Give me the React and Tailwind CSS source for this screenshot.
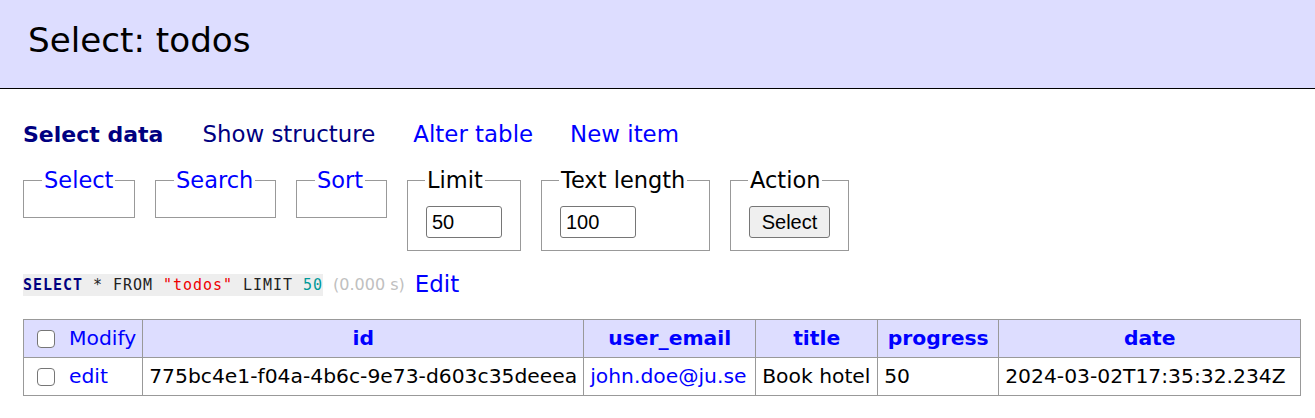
import React from "react";

const fieldsets = [
  { label: "Select", w: "w-[112px]" },
  { label: "Search", w: "w-[121px]" },
  { label: "Sort", w: "w-[91px]" },
];

const cols = [
  { key: "id", w: "w-[441px]" },
  { key: "user_email", w: "w-[172px]" },
  { key: "title", w: "w-[122px]" },
  { key: "progress", w: "w-[121px]" },
  { key: "date", w: "w-[302px]" },
];

const Check = () => (
  <span className="inline-block w-[18px] h-[18px] border-[1.5px] border-[#767676] rounded-[4px] bg-white" />
);

export default function App() {
  return (
    <div className="w-[1315px] h-[418px] bg-white overflow-hidden font-['DejaVu_Sans',Verdana,sans-serif] text-black">
      {/* page heading */}
      <div className="h-[89px] bg-[#ddf] border-b border-black flex items-center pb-[8px] pl-[28px]">
        <h2 className="text-[34.2px] leading-[42px] font-normal">Select: todos</h2>
      </div>

      <div className="pl-[23px]">
        {/* links */}
        <div className="mt-[32px] flex items-center gap-[38px] text-[22.9px] leading-[27px]">
          <span className="font-bold text-[22px] text-[#000080]">Select data</span>
          <a className="ml-[1px] text-[#000080]">Show structure</a>
          <a className="text-[#0000ff]">Alter table</a>
          <a className="-ml-[1px] text-[#0000ff]">New item</a>
        </div>

        {/* form */}
        <div className="mt-[19px] flex items-start gap-[20px] text-[22.5px] leading-[27px]">
          {fieldsets.map((f) => (
            <fieldset key={f.label} className={`${f.w} h-[51px] border border-[#999] px-[17px] pb-[10px]`}>
              <legend className="ml-[1px] px-[2px] text-[#0000ff]">{f.label}</legend>
            </fieldset>
          ))}
          <fieldset className="w-[114px] h-[84px] border border-[#999] px-[17px]">
            <legend className="px-[2px]">Limit</legend>
            <input
              defaultValue="50"
              className="mt-[12px] ml-[1px] w-[76px] h-[32px] border border-[#767676] rounded-[3px] px-[5px] text-[20px] font-['Liberation_Sans',Arial,sans-serif] outline-none"
            />
          </fieldset>
          <fieldset className="w-[169px] h-[84px] border border-[#999] px-[17px]">
            <legend className="px-[2px]">Text length</legend>
            <input
              defaultValue="100"
              className="mt-[12px] ml-[1px] w-[76px] h-[32px] border border-[#767676] rounded-[3px] px-[5px] text-[20px] font-['Liberation_Sans',Arial,sans-serif] outline-none"
            />
          </fieldset>
          <fieldset className="w-[119px] h-[84px] border border-[#999] px-[17px]">
            <legend className="px-[2px]">Action</legend>
            <button className="mt-[12px] ml-[1px] w-[81px] h-[32px] bg-[#efefef] border border-[#767676] rounded-[3px] text-[20px] font-['Liberation_Sans',Arial,sans-serif]">
              Select
            </button>
          </fieldset>
        </div>

        {/* query */}
        <div className="mt-[20px] h-[27px] flex items-center">
          <code className="inline-block bg-[#eee] leading-[22px] text-[15px] tracking-[0.97px] font-['DejaVu_Sans_Mono',monospace] whitespace-pre">
            <span className="font-bold text-[#000080]">SELECT</span>
            <span className="text-[#222]"> * FROM </span>
            <span className="text-[#e00]">"todos"</span>
            <span className="text-[#222]"> LIMIT </span>
            <span className="text-[#099]">50</span>
          </code>
          <span className="ml-[10px] text-[16px] text-[#c0c0c0]">(0.000 s)</span>
          <a className="ml-[10px] text-[22.9px] text-[#0000ff]">Edit</a>
        </div>

        {/* result */}
        <table className="mt-[21px] border-collapse table-fixed text-[20.3px] leading-[25px]">
          <thead>
            <tr className="h-[38px] bg-[#ddf]">
              <td className="w-[119px] border border-[#999] px-[6px]">
                <div className="flex items-center gap-[14px] pl-[7px]">
                  <Check />
                  <a className="text-[#0000ff]">Modify</a>
                </div>
              </td>
              {cols.map((c) => (
                <th key={c.key} className={`${c.w} border border-[#999] px-[6px] text-center font-bold text-[#0000ff]`}>
                  {c.key}
                </th>
              ))}
            </tr>
          </thead>
          <tbody>
            <tr className="h-[38px]">
              <td className="border border-[#999] px-[6px]">
                <div className="flex items-center gap-[14px] pl-[7px]">
                  <Check />
                  <a className="text-[#0000ff]">edit</a>
                </div>
              </td>
              <td className="border border-[#999] px-[6px] whitespace-nowrap">775bc4e1-f04a-4b6c-9e73-d603c35deeea</td>
              <td className="border border-[#999] px-[6px] whitespace-nowrap text-[#0000ff]">john.doe@ju.se</td>
              <td className="border border-[#999] px-[6px] whitespace-nowrap">Book hotel</td>
              <td className="border border-[#999] px-[6px]">50</td>
              <td className="border border-[#999] px-[6px] whitespace-nowrap">2024-03-02T17:35:32.234Z</td>
            </tr>
          </tbody>
        </table>
      </div>
    </div>
  );
}
